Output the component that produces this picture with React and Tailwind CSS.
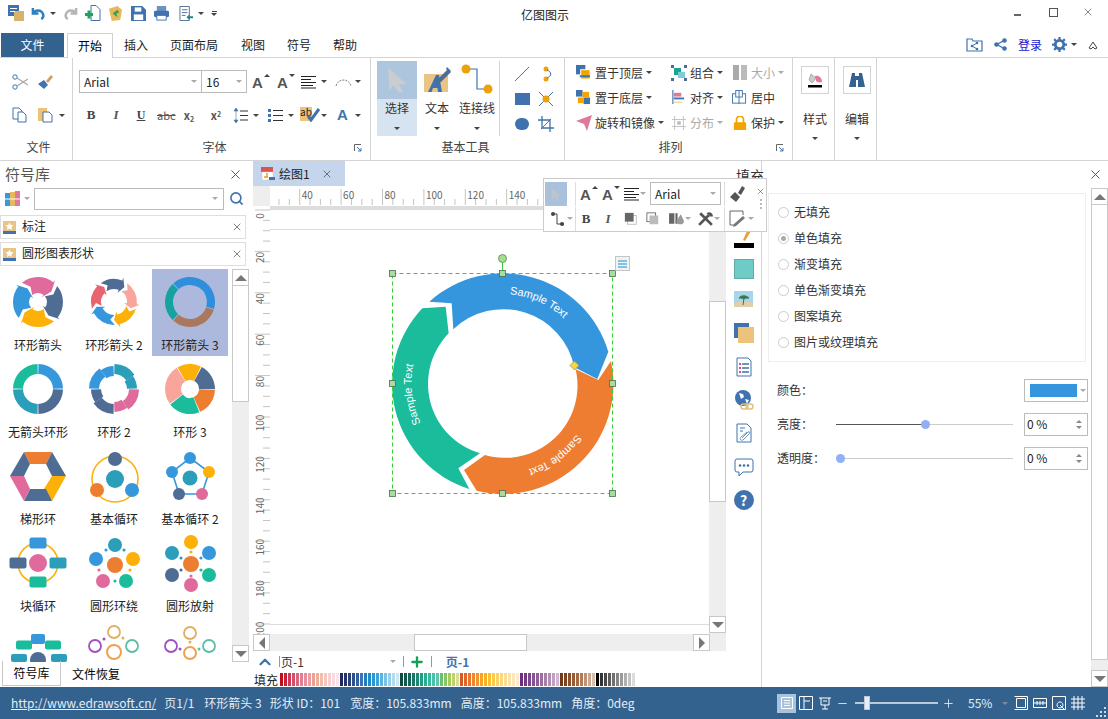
import { X, ChevronUp, Plus, Minus, Search } from 'lucide-react'

const BLUE = '#3f72ae'
const SLATE = '#4f6d94'
const TEAL = '#2b9fb9'
const GREEN = '#1bbc9b'
const PINK = '#df6a9b'
const ORANGE = '#ed7d31'
const YELLOW = '#fdb008'
const SKY = '#3797dc'

const polar = (R, a) => {
  const t = ((a - 90) * Math.PI) / 180
  return `${(38 + R * Math.cos(t)).toFixed(2)} ${(33 + R * Math.sin(t)).toFixed(2)}`
}
const seg = (R, r, a0, a1) =>
  `M${polar(R, a0)}A${R} ${R} 0 0 1 ${polar(R, a1)}L${polar(r, a1)}A${r} ${r} 0 0 0 ${polar(r, a0)}Z`
const arrowSeg = (R, r, a0, a1, head, flare) => {
  const m = (R + r) / 2
  return `M${polar(R, a0)}A${R} ${R} 0 0 1 ${polar(R, a1 - head)}L${polar(R + flare, a1 - head)}L${polar(m, a1)}L${polar(r - flare, a1 - head)}L${polar(r, a1 - head)}A${r} ${r} 0 0 0 ${polar(r, a0)}L${polar(m, a0 + head)}Z`
}

const Caret = ({ light, className = '' }) => (
  <span className={`inline-block w-0 h-0 border-x-[3px] border-x-transparent border-t-[3px] ${light ? 'border-t-[#aaa]' : 'border-t-[#444]'} ${className}`} />
)

const Icon = ({ size = 16, vb = '0 0 16 16', className = '', children }) => (
  <svg width={size} height={size} viewBox={vb} className={`shrink-0 ${className}`}>{children}</svg>
)

const Thumb = ({ children }) => <svg width="76" height="66" viewBox="0 0 76 66">{children}</svg>
const Dot = ({ x, y, r = 7, c }) => <circle cx={x} cy={y} r={r} fill={c} />
const Block = ({ x, y, w = 17, h = 11, c }) => <rect x={x - w / 2} y={y - h / 2} width={w} height={h} rx="2" fill={c} />
const Loop = ({ x, y, r = 6, c }) => <circle cx={x} cy={y} r={r} fill="none" stroke={c} strokeWidth="1.8" />

const Stepped = ({ a0, c }) => (
  <g fill={c}>
    <path d={seg(25, 15, a0 + 1, a0 + 55)} />
    <path d={seg(23, 13, a0 + 55, a0 + 89)} />
  </g>
)

const shapes = [
  {
    name: '环形箭头',
    art: (
      <Thumb>
        <path d={arrowSeg(25, 9, 140, 232, 14, 3)} fill={YELLOW} />
        <path d={arrowSeg(25, 9, 50, 142, 14, 3)} fill={SLATE} />
        <path d={arrowSeg(25, 9, 230, 322, 14, 3)} fill={SKY} />
        <path d={arrowSeg(25, 9, 320, 412, 14, 3)} fill={PINK} />
      </Thumb>
    ),
  },
  {
    name: '环形箭头 2',
    art: (
      <Thumb>
        <path d={arrowSeg(23, 13, 325, 395, 14, 3)} fill={SLATE} />
        <path d={arrowSeg(23, 13, 35, 110, 14, 3)} fill="#f9a59b" />
        <path d={arrowSeg(23, 13, 108, 180, 14, 3)} fill={YELLOW} />
        <path d={arrowSeg(23, 13, 178, 255, 14, 3)} fill={SKY} />
        <path d={arrowSeg(23, 13, 253, 327, 14, 3)} fill="#e8646f" />
      </Thumb>
    ),
  },
  {
    name: '环形箭头 3',
    art: (
      <Thumb>
        <path d={seg(25, 17, -42, 106)} fill="#2f8fdd" />
        <path d={seg(25, 17, 108, 222)} fill="#a9785f" />
        <path d={seg(25, 17, 224, 316)} fill="#16a29f" />
      </Thumb>
    ),
    selected: true,
  },
  {
    name: '无箭头环形',
    art: (
      <Thumb>
        <path d={seg(25, 15, 1, 89)} fill={SKY} />
        <path d={seg(25, 15, 91, 179)} fill={SLATE} />
        <path d={seg(25, 15, 181, 269)} fill={TEAL} />
        <path d={seg(25, 15, 271, 359)} fill={GREEN} />
      </Thumb>
    ),
  },
  {
    name: '环形 2',
    art: (
      <Thumb>
        <Stepped a0={0} c={TEAL} />
        <Stepped a0={90} c={PINK} />
        <Stepped a0={180} c={SLATE} />
        <Stepped a0={270} c={SKY} />
      </Thumb>
    ),
  },
  {
    name: '环形 3',
    art: (
      <Thumb>
        <path d={seg(25, 9, 330, 386)} fill={YELLOW} />
        <path d={seg(25, 9, 28, 90)} fill={SLATE} />
        <path d={seg(25, 9, 92, 156)} fill={ORANGE} />
        <path d={seg(25, 9, 158, 232)} fill={GREEN} />
        <path d={seg(25, 9, 234, 328)} fill="#f9a59b" />
      </Thumb>
    ),
  },
  {
    name: '梯形环',
    art: (
      <Thumb>
        <polygon points="24,9 52,9 46,21 30,21" fill={ORANGE} />
        <polygon points="52,9 66,33 52,33 46,21" fill={SLATE} />
        <polygon points="66,33 52,58 44,46 52,33" fill={YELLOW} />
        <polygon points="52,58 24,58 30,46 46,46" fill={SLATE} />
        <polygon points="24,58 10,33 24,33 30,46" fill={PINK} />
        <polygon points="10,33 24,9 30,21 24,33" fill={SLATE} />
      </Thumb>
    ),
  },
  {
    name: '基本循环',
    art: (
      <Thumb>
        <circle cx="39" cy="36" r="23" fill="none" stroke={YELLOW} strokeWidth="1.6" />
        <Dot x={39} y={36} r={9} c={TEAL} />
        <Dot x={39} y={16} c={SLATE} />
        <Dot x={21} y={47} c={ORANGE} />
        <Dot x={56} y={47} c={SKY} />
      </Thumb>
    ),
  },
  {
    name: '基本循环 2',
    art: (
      <Thumb>
        <polygon points="38,15 57,29 50,51 27,51 20,29" fill="none" stroke={SKY} strokeWidth="1.6" />
        <Dot x={38} y={35} r={7.5} c={TEAL} />
        <Dot x={38} y={15} r={6} c={SKY} />
        <Dot x={57} y={29} r={6} c={YELLOW} />
        <Dot x={50} y={51} r={6} c={PINK} />
        <Dot x={27} y={51} r={6} c={SLATE} />
        <Dot x={20} y={29} r={6} c={SKY} />
      </Thumb>
    ),
  },
  {
    name: '块循环',
    art: (
      <Thumb>
        <circle cx="38" cy="33" r="20" fill="none" stroke={YELLOW} strokeWidth="1.6" />
        <Dot x={38} y={33} r={9} c={PINK} />
        <Block x={38} y={13} c={SKY} />
        <Block x={18} y={33} c={SLATE} />
        <Block x={58} y={33} c={TEAL} />
        <Block x={38} y={52} c={GREEN} />
      </Thumb>
    ),
  },
  {
    name: '圆形环绕',
    art: (
      <Thumb>
        <Dot x={39} y={35} r={8} c={ORANGE} />
        <Dot x={39} y={15} c={TEAL} />
        <Dot x={57} y={29} c={YELLOW} />
        <Dot x={50} y={51} c={GREEN} />
        <Dot x={27} y={51} c={PINK} />
        <Dot x={20} y={29} c={SKY} />
        <Dot x={30} y={20} r={1.6} c={SKY} />
        <Dot x={48} y={20} r={1.6} c={TEAL} />
        <Dot x={54} y={40} r={1.6} c={YELLOW} />
        <Dot x={39} y={51} r={1.6} c={GREEN} />
        <Dot x={23} y={40} r={1.6} c={PINK} />
      </Thumb>
    ),
  },
  {
    name: '圆形放射',
    art: (
      <Thumb>
        <Dot x={39} y={34} r={8} c={ORANGE} />
        <Dot x={39} y={12} c={YELLOW} />
        <Dot x={57} y={23} c={SKY} />
        <Dot x={57} y={45} c={GREEN} />
        <Dot x={39} y={55} c={PINK} />
        <Dot x={20} y={45} c={SLATE} />
        <Dot x={20} y={23} c={TEAL} />
        <Dot x={39} y={22} r={1.6} c={YELLOW} />
        <Dot x={49} y={28} r={1.6} c={SKY} />
        <Dot x={49} y={40} r={1.6} c={GREEN} />
        <Dot x={39} y={46} r={1.6} c={PINK} />
        <Dot x={29} y={40} r={1.6} c={SLATE} />
        <Dot x={29} y={28} r={1.6} c={TEAL} />
      </Thumb>
    ),
  },
  {
    art: (
      <Thumb>
        <Dot x={38} y={43} r={8} c={SLATE} />
        <Block x={38} y={22} w={14} h={10} c={SKY} />
        <Block x={24} y={28} w={16} h={9} c={GREEN} />
        <Block x={53} y={28} w={16} h={9} c={GREEN} />
        <Block x={19} y={41} w={16} h={8} c={TEAL} />
        <Block x={59} y={41} w={16} h={8} c={TEAL} />
      </Thumb>
    ),
  },
  {
    art: (
      <Thumb>
        <circle cx="38" cy="35" r="7" fill="none" stroke="#f0a050" strokeWidth="2" />
        <Loop x={38} y={15} c="#e0b060" />
        <Loop x={56} y={29} c="#5bbfa5" />
        <Loop x={19} y={29} c="#a050c0" />
        <Dot x={28} y={22} r={1.5} c="#a050c0" />
        <Dot x={47} y={21} r={1.5} c="#e0b060" />
      </Thumb>
    ),
  },
  {
    art: (
      <Thumb>
        <circle cx="38" cy="36" r="6" fill="none" stroke="#f0a050" strokeWidth="2" />
        <Loop x={38} y={16} c="#e0b060" />
        <Loop x={57} y={29} c="#5bbfa5" />
        <Loop x={19} y={29} c="#a050c0" />
        <Dot x={38} y={25} r={1.5} c="#e0b060" />
        <Dot x={47} y={32} r={1.5} c="#5bbfa5" />
        <Dot x={28} y={32} r={1.5} c="#a050c0" />
      </Thumb>
    ),
  },
]

const palette = [
  '#c00d1e', '#c9203a', '#ce3b55', '#d2506a', '#d76780', '#e07f92', '#e68e9b', '#ea9ea4', '#eda08f', '#f0ad98', '#f3bcaa', '#f5c7c0', '#f7d0d0', '#f9dbdf', '#fbe3ec',
  '#1f2a5c', '#253469', '#2b3f78', '#2f4f8b', '#35609f', '#3c73b2', '#1f7fbe', '#1f8cc8', '#2898d0', '#3aa5d8', '#5ab4df', '#78c2e5', '#95cfea', '#b0dcee', '#cbe8f3',
  '#0e4a3f', '#12584a', '#156558', '#197565', '#1e8a74', '#229c80', '#2aad8f', '#36ba9e', '#4ac0a8', '#5dc5b0', '#6bbf6f', '#86c662', '#a3cc5a', '#bdd46a', '#d5dea0',
  '#d35b26', '#e0672a', '#e9762c', '#ef8431', '#f2952f', '#f5a428', '#f9b21e', '#fbbf2e', '#fcc94a', '#fcd266', '#f8d77f', '#f9dd94', '#fae2a8', '#fbe6ba', '#fcebcc',
  '#6a2e7f', '#74397f', '#7d4790', '#86548f', '#915f96', '#9c6ea0', '#a77ea9', '#b38eb4', '#c0a0c0', '#d0b6d0',
  '#6e3a1c', '#7e4420', '#8c4f28', '#985b34', '#a56a42', '#b17d58', '#bd9273', '#c9a88f', '#d6bfac',
  '#000000', '#333333', '#484848', '#5c5c5c', '#707070', '#858585', '#9a9a9a', '#afafaf', '#c4c4c4', '#dcdcdc',
]

const Launcher = () => (
  <Icon size={8} vb="0 0 8 8">
    <path d="M0.5 7V0.5H7" fill="none" stroke="#666" />
    <path d="M3 3l4 4M7 4v3H4" fill="none" stroke="#3f72ae" />
  </Icon>
)

const GrowA = ({ shrink, color = '#555' }) => (
  <span className="flex w-[18px] h-[18px] relative">
    <span className="font-bold text-[15px] leading-[20px] font-['Liberation_Sans',sans-serif]" style={{ color }}>A</span>
    <span className={`absolute right-0 top-[1px] w-0 h-0 border-x-[3px] border-x-transparent ${shrink ? 'border-t-[3px] border-t-[#444]' : 'border-b-[3px] border-b-[#444]'}`} />
  </span>
)

const AlignIcon = () => (
  <Icon size={15} vb="0 0 15 15">
    <path d="M0 2.5h15M0 5.5h10M0 8.5h15M0 11.5h12M0 14h15" stroke="#222" strokeWidth="1" />
  </Icon>
)

const Arrow = ({ size = 20, fill = '#c9cdd2' }) => (
  <Icon size={size} vb="0 0 24 30">
    <path d="M2 1L23 20H14L19 29L14 29L8 21L3 27Z" fill={fill} />
  </Icon>
)

const SmallTool = ({ children, label, disabled, caret = true, className = '' }) => (
  <div className={`flex items-center h-[25px] ${className}`}>
    <span className="w-[15px] h-[16px] flex items-center justify-center shrink-0">{children}</span>
    <span className={`ml-[4px] whitespace-nowrap ${disabled ? 'text-[#aaa]' : 'text-[#333]'}`}>{label}</span>
    {caret && <Caret light={disabled} className="ml-[3px]" />}
  </div>
)

const BigTool = ({ label, children, active }) => (
  <div className={`w-10 h-[75px] flex flex-col items-center ${active ? 'bg-[#d6e3f0]' : ''}`}>
    <div className={`w-10 h-[38px] flex items-center justify-center ${active ? 'bg-[#aec5de]' : ''}`}>{children}</div>
    <span className="h-[18px] leading-[18px] whitespace-nowrap">{label}</span>
    <Caret className="mt-[10px]" />
  </div>
)

const Group = ({ label, className, labelClass = '', children, launcher }) => (
  <div className={`relative flex flex-col h-[102px] border-r border-[#d4d4d4] shrink-0 ${className}`}>
    <div className="flex-1 min-h-0">{children}</div>
    <div className={`h-[24px] pb-[2px] flex items-center justify-center text-[#444] ${labelClass}`}>{label}</div>
    {launcher && <span className="absolute right-[8px] bottom-[8px] flex"><Launcher /></span>}
  </div>
)

const Combo = ({ label, className }) => (
  <div className={`h-[23px] border border-[#bcbcbc] bg-white flex items-center justify-between px-[4px] ${className}`}>
    <span className="text-[#222]">{label}</span>
    <Caret light />
  </div>
)

const ScrollBtn = ({ dir, className = '' }) => {
  const arrow = {
    up: 'border-x-[6px] border-x-transparent border-b-[6px] border-b-[#777]',
    down: 'border-x-[6px] border-x-transparent border-t-[6px] border-t-[#777]',
    left: 'border-y-[6px] border-y-transparent border-r-[6px] border-r-[#777]',
    right: 'border-y-[6px] border-y-transparent border-l-[6px] border-l-[#777]',
  }[dir]
  return (
    <div className={`w-[17px] h-[17px] shrink-0 bg-white border border-[#c8c8c8] flex items-center justify-center ${className}`}>
      <span className={`w-0 h-0 ${arrow}`} />
    </div>
  )
}

const TitleBar = () => (
  <div className="h-[32px] flex items-center shrink-0">
    <div className="w-[521px] flex items-center pl-[8px] pb-[6px] shrink-0">
      <Icon>
        <rect x="0" y="0" width="11" height="11" fill={BLUE} />
        <rect x="6" y="6" width="10" height="10" fill="#d9b26a" />
        <path d="M2 3.5h7M2 6.5h5" stroke="#fff" />
      </Icon>
      <Icon size={15} vb="0 0 16 16" className="ml-[7px]">
        <path d="M2 2v6h6M2 8c2-4 9-5 11 1 .6 2-.5 4-2 5" fill="none" stroke="#2f7fc1" strokeWidth="2.6" />
      </Icon>
      <Caret className="ml-[4px]" />
      <Icon size={15} className="ml-[7px]">
        <path d="M14 2v6H8M14 8C12 4 5 3 3 9c-.6 2 .5 4 2 5" fill="none" stroke="#b5b5b5" strokeWidth="2.6" />
      </Icon>
      <Icon size={16} className="ml-[7px]">
        <path d="M6 .5h5l4 4v11H6z" fill="#fff" stroke={BLUE} />
        <path d="M0 9.5h8M4 5.5v8" stroke="#1ea360" strokeWidth="3" />
      </Icon>
      <Icon size={15} className="ml-[7px]">
        <path d="M1 3l9-3 5 4-2 11-9 1z" fill="#e8b95a" />
        <path d="M5 8l5-4 2 3-3 1 1 4z" fill="#3d9c4a" />
      </Icon>
      <Icon size={15} className="ml-[8px]">
        <path d="M0 0h12l4 4v12H0z" fill={BLUE} />
        <rect x="4" y="1.5" width="7" height="4.5" fill="#fff" />
        <rect x="3" y="9" width="10" height="6" fill="#fff" />
      </Icon>
      <Icon size={15} className="ml-[8px]">
        <rect x="3" y="0" width="10" height="6" fill="#6b93bd" />
        <rect x="0" y="5" width="16" height="7" rx="1.5" fill={BLUE} />
        <rect x="3" y="10" width="10" height="5" fill="#fff" stroke={BLUE} />
      </Icon>
      <Icon size={15} className="ml-[10px]">
        <path d="M1 .5h10v15H1z" fill="#fff" stroke={SLATE} />
        <path d="M3 4h6M3 7h6M3 10h4" stroke={SLATE} />
        <path d="M8 12l3-3v2h4v2h-4v2z" fill="#2a7f8f" />
      </Icon>
      <Caret className="ml-[4px]" />
      <span className="ml-[7px] flex flex-col items-center gap-[1px]">
        <span className="w-[5px] h-px bg-[#444]" />
        <Caret />
      </span>
    </div>
    <span className="text-[#222] pb-[3px]">亿图图示</span>
    <div className="ml-auto flex items-center pr-[14px] pb-[8px]">
      <span className="w-[7px] h-[2px] bg-[#666] mt-[6px]" />
      <span className="ml-[28px] w-[9px] h-[9px] border border-[#555]" />
      <X size={12} strokeWidth={1.3} color="#444" className="ml-[24px]" />
    </div>
  </div>
)

const TabRow = () => (
  <div className="h-[25px] flex items-end shrink-0 relative">
    <div className="ml-[1px] w-[63px] h-[24px] pb-px bg-[#33628f] text-white flex items-center justify-center">文件</div>
    <div className="ml-[3px] w-[46px] h-[25px] pb-px bg-white border border-b-0 border-[#d0d0d0] flex items-center justify-center -mb-px z-10">开始</div>
    <div className="flex items-center h-[24px] pb-px text-[#222]">
      <span className="ml-[11px]">插入</span>
      <span className="ml-[22px]">页面布局</span>
      <span className="ml-[23px]">视图</span>
      <span className="ml-[22px]">符号</span>
      <span className="ml-[22px]">帮助</span>
    </div>
    <div className="ml-auto flex items-center h-[24px] pb-px pr-[10px]">
      <Icon size={17} vb="0 0 17 17">
        <path d="M1 3h5l1 2h9v10H1z" fill="none" stroke={BLUE} strokeWidth="1.2" />
        <path d="M11 7L6 10l5 3" fill="none" stroke={BLUE} />
        <circle cx="11" cy="7" r="1.3" fill={BLUE} />
        <circle cx="6" cy="10" r="1.3" fill={BLUE} />
        <circle cx="11" cy="13" r="1.3" fill={BLUE} />
      </Icon>
      <Icon size={13} vb="0 0 13 13" className="ml-[11px]">
        <path d="M10 2.5L3 6.5l7 4" fill="none" stroke={BLUE} strokeWidth="1.4" />
        <circle cx="10.5" cy="2.5" r="2.3" fill={BLUE} />
        <circle cx="2.5" cy="6.5" r="2.3" fill={BLUE} />
        <circle cx="10.5" cy="10.5" r="2.3" fill={BLUE} />
      </Icon>
      <span className="ml-[11px] text-[#1515d0]">登录</span>
      <Icon size={15} vb="0 0 16 16" className="ml-[10px]">
        <circle cx="8" cy="8" r="4.5" fill="none" stroke={BLUE} strokeWidth="3" />
        <path d="M8 0v3M8 13v3M0 8h3M13 8h3M2.3 2.3l2 2M11.7 11.7l2 2M13.7 2.3l-2 2M4.3 11.7l-2 2" stroke={BLUE} strokeWidth="2.4" />
      </Icon>
      <Caret className="ml-[4px]" />
      <Icon size={10} vb="0 0 10 10" className="ml-[11px]">
        <path d="M1 8L5 2l4 6-2 1-2-2-2 2z" fill="none" stroke="#444" />
      </Icon>
    </div>
  </div>
)

const Ribbon = () => (
  <div className="h-[104px] flex shrink-0 border-y border-[#d4d4d4] text-[#333]">
    <Group label="文件" className="w-[73px]" labelClass="pl-[5px]">
      <div className="flex items-center pl-[12px] pt-[14px] h-[33px]">
        <Icon>
          <circle cx="3" cy="3" r="2.2" fill="none" stroke="#3f72ae" />
          <circle cx="3" cy="13" r="2.2" fill="none" stroke="#3f72ae" />
          <path d="M5 4l11 7M5 12L16 5" stroke="#aaa" strokeWidth="1.4" />
        </Icon>
        <Icon className="ml-[9px]">
          <path d="M9 7l5-6 2 2-5 6z" fill="#c9a25e" />
          <path d="M1 10l6-4 4 5-4 4z" fill={BLUE} />
        </Icon>
      </div>
      <div className="flex items-center pl-[12px] h-[33px] pt-[15px]">
        <Icon>
          <path d="M1 1h6l3 3v8H1z" fill="#fff" stroke={BLUE} />
          <path d="M6 5h5l3 3v7H6z" fill="#fff" stroke={BLUE} />
        </Icon>
        <Icon className="ml-[9px]">
          <path d="M1 1h9v13H1z" fill="#edc27a" />
          <path d="M6 5h6l3 3v7H6z" fill="#fff" stroke={BLUE} />
        </Icon>
        <Caret className="ml-[6px]" />
      </div>
    </Group>

    <Group label="字体" className="w-[298px]" labelClass="pr-[14px]" launcher>
      <div className="flex items-center pl-[6px] pt-[12px]">
        <Combo label="Arial" className="w-[123px]" />
        <Combo label="16" className="w-[46px] -ml-px" />
        <span className="ml-[5px] flex"><GrowA /></span>
        <span className="ml-[7px] flex"><GrowA shrink /></span>
        <span className="ml-[6px] flex"><AlignIcon /></span>
        <Caret className="ml-[5px]" />
        <Icon size={17} vb="0 0 17 17" className="ml-[8px]">
          <path d="M1 13C3 5 14 5 16 13" fill="none" stroke="#888" strokeDasharray="2 1" />
        </Icon>
        <Caret className="ml-[3px]" />
      </div>
      <div className="flex items-center h-[24px] mt-[10px] pl-[10px]">
        <span className="w-[16px] text-center font-bold text-[13px] text-[#444] font-['Liberation_Serif',serif]">B</span>
        <span className="ml-[9px] w-[16px] text-center font-bold italic text-[13px] text-[#555] font-['Liberation_Serif',serif]">I</span>
        <span className="ml-[9px] w-[16px] text-center font-bold underline text-[12px] text-[#444] font-['Liberation_Serif',serif]">U</span>
        <span className="ml-[8px] w-[18px] text-center text-[11px] text-[#555] line-through">abc</span>
        <span className="ml-[6px] w-[16px] text-center font-bold text-[11px] text-[#555]">x<sub className="text-[7px]">2</sub></span>
        <span className="ml-[11px] w-[16px] text-center font-bold text-[11px] text-[#555]">x<sup className="text-[7px]">2</sup></span>
        <Icon size={15} vb="0 0 15 15" className="ml-[9px]">
          <path d="M3 0L1 3h4zM3 15l-2-3h4zM3 3v9" fill={BLUE} stroke={BLUE} strokeWidth=".6" />
          <path d="M7 3h8M7 7.500h8M7 12h8" stroke="#333" />
        </Icon>
        <Caret className="ml-[5px]" />
        <Icon size={15} vb="0 0 15 15" className="ml-[9px]">
          <rect x="0" y="1" width="3" height="3" fill={BLUE} />
          <rect x="0" y="6" width="3" height="3" fill={BLUE} />
          <rect x="0" y="11" width="3" height="3" fill={BLUE} />
          <path d="M5 2.500h10M5 7.500h10M5 12.500h10" stroke="#333" />
        </Icon>
        <Caret className="ml-[5px]" />
        <span className="relative ml-[6px] w-[20px] h-[16px] flex">
          <span className="w-[13px] h-[14px] bg-[#edc27a] text-[10px] leading-[10px] text-[#222]">ab</span>
          <Icon size={14} vb="0 0 14 14" className="-ml-[6px] mt-[1px]">
            <path d="M2 8l3 4 8-11" fill="none" stroke={BLUE} strokeWidth="3" />
          </Icon>
        </span>
        <Caret className="ml-[1px]" />
        <span className="ml-[10px] font-bold text-[15px] text-[#3f72ae] font-['Liberation_Sans',sans-serif]">A</span>
        <Caret className="ml-[7px]" />
      </div>
    </Group>

    <Group label="基本工具" className="w-[194px]" labelClass="pr-[4px]">
      <div className="flex items-start pl-[6px] pt-[3px]">
        <BigTool label="选择" active><Arrow size={26} /></BigTool>
        <BigTool label="文本">
          <Icon size={28} vb="0 0 28 28">
            <rect x="1" y="8" width="24" height="18" fill="#e9c484" />
            <path d="M5 26L13 9h3l3 17h-4l-.5-4H10l-1.500 4z" fill={BLUE} />
            <path d="M15 13L25 3l3 3-10 10-4 1z" fill={SLATE} />
            <path d="M24 1l4 4-2 1-3-3z" fill={BLUE} />
          </Icon>
        </BigTool>
        <BigTool label="连接线">
          <Icon size={32} vb="0 0 32 32">
            <path d="M5 5h11v20h13" fill="none" stroke={BLUE} strokeWidth="1.2" />
            <circle cx="5" cy="5" r="4.500" fill="#eda20b" />
            <circle cx="27" cy="25" r="4.500" fill="#eda20b" />
          </Icon>
        </BigTool>
        <div className="h-[75px] w-px bg-[#d4d4d4] ml-[2px]" />
        <div className="grid grid-cols-[24px_24px] auto-rows-[25px] ml-[10px] justify-items-center items-center">
          <Icon><path d="M1 15L15 1" stroke={BLUE} /></Icon>
          <Icon>
            <circle cx="8" cy="3" r="2.500" fill="#eda20b" />
            <circle cx="8" cy="13" r="2.500" fill="#eda20b" />
            <path d="M9 4c5 2 5 6 0 8" fill="none" stroke={BLUE} />
          </Icon>
          <span className="w-[15px] h-[12px] bg-[#3f72ae]" />
          <Icon>
            <path d="M1 1l14 14M15 1L1 15" stroke={BLUE} />
            <circle cx="8" cy="8" r="3.500" fill="#eda20b" />
          </Icon>
          <span className="w-[14px] h-[12px] rounded-full bg-[#3f72ae]" />
          <Icon>
            <path d="M4 0v12h12M0 4h12v12" fill="none" stroke={BLUE} strokeWidth="1.3" />
            <path d="M3 13L13 3" stroke={BLUE} />
          </Icon>
        </div>
      </div>
    </Group>

    <Group label="排列" className="w-[228px]" labelClass="pr-[16px]" launcher>
      <div className="grid grid-cols-[95px_61px_60px] auto-rows-[25px] pl-[11px] pt-[2px]">
        <SmallTool label="置于顶层">
          <Icon size={15}>
            <rect x="0" y="0" width="10" height="10" fill={BLUE} />
            <rect x="5" y="5" width="10" height="10" fill="#f4a400" stroke="#fff" />
            <rect x="4" y="11" width="11" height="2" fill={BLUE} />
          </Icon>
        </SmallTool>
        <SmallTool label="组合">
          <Icon size={16}>
            <rect x="3" y="3" width="7" height="7" fill="#1aa390" />
            <rect x="7" y="7" width="7" height="6" fill="#7fcbdc" />
            <path d="M0 0h3v3H0zM13 0h3v3h-3zM0 13h3v3H0zM13 13h3v3h-3z" fill={SLATE} />
          </Icon>
        </SmallTool>
        <SmallTool label="大小" disabled>
          <span className="flex gap-[2px]"><span className="w-[6px] h-[15px] bg-[#aaa]" /><span className="w-[6px] h-[15px] bg-[#bbb]" /></span>
        </SmallTool>
        <SmallTool label="置于底层">
          <Icon size={15}>
            <rect x="0" y="0" width="7" height="7" fill={BLUE} />
            <rect x="8" y="8" width="7" height="7" fill={BLUE} />
            <rect x="7" y="2" width="7" height="6" fill="#f4a400" />
            <rect x="2" y="8" width="6" height="6" fill="#f4a400" />
          </Icon>
        </SmallTool>
        <SmallTool label="对齐">
          <Icon size={15}>
            <path d="M2 0v15" stroke={BLUE} strokeWidth="1.2" />
            <rect x="3" y="3" width="8" height="4" fill="#e0789a" />
            <rect x="3" y="8" width="11" height="2" fill={BLUE} />
            <path d="M3 13h9" stroke="#edc27a" />
          </Icon>
        </SmallTool>
        <SmallTool label="居中" caret={false}>
          <Icon size={15}>
            <rect x=".5" y="4" width="14" height="10" fill="none" stroke={BLUE} />
            <rect x="4" y=".5" width="7" height="7" fill="#fff" stroke={BLUE} />
            <path d="M7.500 0v15" stroke={BLUE} />
          </Icon>
        </SmallTool>
        <SmallTool label="旋转和镜像">
          <Icon size={16}>
            <path d="M0 6L16 0 11 16 8 9z" fill="#dd7a9e" />
          </Icon>
        </SmallTool>
        <SmallTool label="分布" disabled>
          <Icon size={14}>
            <path d="M3 0v16M13 0v16M0 4h16M0 12h16" stroke="#bbb" />
            <rect x="6" y="6" width="4" height="4" fill="#bbb" />
          </Icon>
        </SmallTool>
        <SmallTool label="保护">
          <Icon size={14}>
            <path d="M4 8V4a4 4 0 018 0v4" fill="none" stroke="#f4a400" strokeWidth="2" />
            <rect x="1" y="7" width="14" height="9" rx="1" fill="#f4a400" />
          </Icon>
        </SmallTool>
      </div>
    </Group>

    <div className="flex flex-col items-center w-[42px] h-[102px] border-r border-[#d4d4d4] shrink-0 pt-[8px] pl-[3px]">
      <div className="w-[28px] h-[28px] border border-[#d4d4d4] flex items-center justify-center">
        <Icon>
          <path d="M4 2l5 4-4 5-3-3z" fill="#ccc" stroke="#888" strokeWidth=".6" />
          <path d="M8 4c4-1 7 2 7 6-3 1-5 0-6-1z" fill="#dd7a9e" />
          <rect x="1" y="13" width="14" height="2.500" fill="#000" />
        </Icon>
      </div>
      <span className="mt-[15px] leading-[20px]">样式</span>
      <Caret className="mt-[8px]" />
    </div>
    <div className="flex flex-col items-center w-[42px] h-[102px] border-r border-[#d4d4d4] shrink-0 pt-[8px] pl-[3px]">
      <div className="w-[28px] h-[28px] border border-[#d4d4d4] flex items-center justify-center">
        <Icon>
          <path d="M3 1h3v3h4V1h3l3 14H9V8H7v7H0z" fill="#34618f" />
        </Icon>
      </div>
      <span className="mt-[15px] leading-[20px]">编辑</span>
      <Caret className="mt-[8px]" />
    </div>
  </div>
)

const SymbolPanel = () => (
  <aside className="w-[250px] shrink-0 flex flex-col relative">
    <div className="h-[26px] flex items-center justify-between pl-[5px] pr-[7px]">
      <span className="text-[15px] text-[#555]">符号库</span>
      <X size={15} strokeWidth={1.4} color="#444" />
    </div>
    <div className="h-[23px] flex items-center pl-[5px]">
      <Icon size={15} vb="0 0 15 15">
        <rect x="0" y="2" width="5" height="13" fill="#3a97dc" />
        <rect x="5" y="1" width="5" height="14" fill="#e8b95a" />
        <rect x="10" y="0" width="5" height="15" fill="#e0789a" />
        <path d="M0 8h15" stroke="#fff" />
      </Icon>
      <Caret light className="ml-[4px] border-t-[#888]" />
      <div className="ml-[4px] w-[190px] h-[22px] border border-[#bcbcbc] flex items-center justify-end pr-[5px]"><Caret light /></div>
      <Search size={15} strokeWidth={2.6} color={BLUE} className="ml-[5px]" />
    </div>
    {['标注', '圆形图表形状'].map((t, i) => (
      <div key={t} className={`w-[246px] h-[24px] border border-[#dedede] flex items-center pl-[2px] pr-[2px] ${i ? 'mt-[3px]' : 'mt-[5px]'}`}>
        <Icon size={13} vb="0 0 13 13">
          <rect width="13" height="10" fill="#e9c484" />
          <rect y="10" width="13" height="3" fill={BLUE} />
          <path d="M6.500 1.500l1.200 2.500 2.800.3-2 1.900.5 2.700-2.500-1.300-2.500 1.300.5-2.700-2-1.900 2.800-.3z" fill="#fff" />
        </Icon>
        <span className="ml-[6px] text-[#222] leading-[16px] pb-[2px]">{t}</span>
        <X size={12} strokeWidth={1.5} color="#555" className="ml-auto" />
      </div>
    ))}
    <div className="flex flex-1 min-h-0 pt-[3px]">
      <div className="w-[228px] h-[393px] overflow-hidden grid grid-cols-[76px_76px_76px] auto-rows-[87px] shrink-0">
        {shapes.map((s, i) => (
          <div key={i} className={`flex flex-col items-center text-[#222] ${s.selected ? 'bg-[#adb9dc]' : ''}`}>
            {s.art}
            {s.name && <span className="mt-[1px] leading-[18px] whitespace-nowrap">{s.name}</span>}
          </div>
        ))}
      </div>
      <div className="ml-[4px] w-[17px] h-[393px] flex flex-col bg-[#eeeeee]">
        <ScrollBtn dir="up" />
        <div className="h-[116px] bg-white border border-t-0 border-[#c8c8c8]" />
        <ScrollBtn dir="down" className="mt-auto" />
      </div>
    </div>
    <div className="h-[26px] flex items-start shrink-0">
      <div className="ml-[2px] w-[59px] h-[25px] border border-t-0 border-[#c8c8c8] flex items-center justify-center">符号库</div>
      <span className="ml-[11px] leading-[25px]">文件恢复</span>
    </div>
  </aside>
)

const Ruler = () => (
  <svg width="456" height="20" viewBox="0 0 456 20" className="block">
    {Array.from({ length: 45 }, (_, i) => {
      const x = i * 10.35 - 1.35
      const major = i % 4 === 3
      return <path key={i} d={`M${x} ${major ? 3 : 13}V19`} stroke="#c4c4c4" />
    })}
    {[40, 60, 80, 100, 120, 140].map((n, i) => (
      <text key={n} x={31.7 + i * 41.4} y={13} fontSize="10" fill="#666">{n}</text>
    ))}
  </svg>
)

const VRuler = () => (
  <svg width="17" height="428" viewBox="0 0 17 428" className="block">
    {Array.from({ length: 42 }, (_, i) => (
      <path key={i} d={`M${i % 4 === 0 ? 2 : 10} ${i * 10.35 + 4}H17`} stroke="#c4c4c4" />
    ))}
    {[0, 20, 40, 60, 80, 100, 120, 140, 160, 180, 200].map((n, i) => (
      <text key={n} transform={`translate(11 ${i * 41.4 + 10}) rotate(-90)`} textAnchor="middle" fontSize="10" fill="#666">{n}</text>
    ))}
  </svg>
)

const Handle = ({ x, y }) => <rect x={x - 3} y={y - 3} width="6" height="6" fill="#a9dca0" stroke="#47704a" strokeWidth=".8" />

const circlePath = (r) => `M502.500 ${383 - r}A${r} ${r} 0 1 1 502.499 ${383 - r}`

const Diagram = () => (
  <svg width="260" height="260" viewBox="380 250 260 260" className="absolute left-[110px] top-[44px]">
    <g transform="translate(380 250) scale(.3333)">
      <path d="M148 155A330 330 0 0 1 685 305L652 387L583 352A217 217 0 0 0 220 238L215 160Z" fill="#3596dd" />
      <path d="M693 333A330 330 0 0 1 290 722L252 660L315 615A217 217 0 0 0 587 358L655 390Z" fill="#ee7d31" />
      <path d="M268 717A330 330 0 0 1 127 175L197 170L206 250A217 217 0 0 0 300 610L235 655Z" fill="#1bbc9b" />
    </g>
    <path id="ring-blue" d={circlePath(89)} fill="none" />
    <path id="ring-orange" d={circlePath(90)} fill="none" />
    <path id="ring-green" d={circlePath(91)} fill="none" />
    <g fontFamily="'Liberation Sans', sans-serif" fontSize="11" fill="#fff" textAnchor="middle">
      <text><textPath href="#ring-blue" startOffset="6.7%">Sample Text</textPath></text>
      <text><textPath href="#ring-orange" startOffset="40%">Sample Text</textPath></text>
      <text><textPath href="#ring-green" startOffset="73%">Sample Text</textPath></text>
    </g>
    <rect x="392.500" y="273.500" width="220" height="220" fill="none" stroke="#2fd02f" strokeDasharray="4 3" />
    <path d="M502.500 262V273" stroke="#2fd02f" />
    <circle cx="502.500" cy="258.500" r="4" fill="#a6dc8f" stroke="#6f9a6a" />
    {[392.5, 502.5, 612.5].flatMap((x) => [273.5, 383.5, 493.5].map((y) => (x === 502.5 && y === 383.5 ? null : <Handle key={`${x}-${y}`} x={x} y={y} />)))}
    <path d="M574.500 361l4.500 4.500-4.500 4.500-4.500-4.500z" fill="#f6d64a" stroke="#a08a20" strokeWidth=".7" />
    <rect x="615.500" y="256.500" width="14" height="14" fill="#f1f1f1" stroke="#c4c4c4" />
    <path d="M618 261h9M618 264h9M618 267h9" stroke="#5fb2dc" strokeWidth="1.6" />
  </svg>
)

const Canvas = () => (
  <div className="w-[476px] shrink-0 pl-[3px] flex flex-col">
    <div className="h-[25px] shrink-0">
      <div className="w-[92px] h-[25px] bg-[#c5d5ec] flex items-center pl-[8px]">
        <Icon size={14} vb="0 0 14 14">
          <rect x="0" y="0" width="12" height="5" fill="#d9534f" />
          <rect x="1" y="5" width="11" height="8" fill="#fff" stroke="#ccc" strokeWidth=".5" />
          <path d="M6 6v4M3 10h4" stroke="#e0a020" strokeWidth="1.4" />
          <rect x="8" y="10" width="6" height="3" fill={BLUE} />
        </Icon>
        <span className="ml-[4px] text-[#222]">绘图1</span>
        <X size={12} strokeWidth={1.4} color="#444" className="ml-[11px]" />
      </div>
    </div>
    <div className="h-[20px] flex shrink-0">
      <div className="w-[17px] bg-[#eeeeee]" />
      <Ruler />
    </div>
    <div className="h-[428px] flex shrink-0">
      <div className="w-[17px] shrink-0"><VRuler /></div>
      <div className="relative w-[439px] flex flex-col shrink-0">
        <div className="h-[4px] bg-[#dddddd]" />
        <div className="h-[20px] border-b border-[#dcdcdc]" />
        <div className="h-[395px] border-b border-[#dcdcdc]" />
        <Diagram />
      </div>
      <div className="w-[17px] shrink-0 bg-[#eeeeee] flex flex-col">
        <div className="h-[95px]" />
        <div className="h-[201px] bg-white border border-[#c8c8c8]" />
        <ScrollBtn dir="down" className="mt-[114px]" />
      </div>
    </div>
    <div className="h-[17px] flex shrink-0 bg-[#eeeeee]">
      <ScrollBtn dir="left" />
      <div className="ml-[144px] w-[113px] h-[17px] bg-white border border-[#c8c8c8]" />
      <ScrollBtn dir="right" className="ml-[166px]" />
    </div>
    <div className="h-[21px] flex items-center shrink-0 text-[#333]">
      <ChevronUp size={18} strokeWidth={3} color={BLUE} className="ml-[3px]" />
      <span className="ml-[5px] w-px h-[11px] bg-[#999]" />
      <span className="ml-px">页-1</span>
      <Caret light className="ml-[86px]" />
      <span className="ml-[7px] w-px h-[11px] bg-[#999]" />
      <Plus size={16} strokeWidth={3.4} color="#14a05a" className="ml-[5px]" />
      <span className="ml-[6px] w-px h-[11px] bg-[#999]" />
      <span className="ml-[14px] text-[#3f72ae] font-bold">页-1</span>
    </div>
    <div className="h-[15px] flex items-center shrink-0">
      <span className="ml-[1px] w-[26px] text-[#222] leading-[15px]">填充</span>
      <div className="flex h-[13px]">
        {palette.map((c, i) => <span key={i} className="w-[3px] mr-px" style={{ backgroundColor: c }} />)}
      </div>
    </div>
  </div>
)

const IconStrip = () => (
  <div className="w-[36px] shrink-0 border-r border-[#d4d4d4] flex flex-col items-center relative">
    <span className="h-[28px] self-start pl-[10px] leading-[28px] text-[14px] text-[#333] whitespace-nowrap">填充</span>
    <div className="h-[32px]" />
    <div className="flex flex-col items-center w-full">
      <div className="h-[33px] flex items-center justify-center">
        <Icon size={20} vb="0 0 20 20">
          <path d="M3 0h14v16H3z" fill="#fff" />
          <path d="M9 12l5-11 3 2-6 10z" fill="#e8a040" />
          <rect x="0" y="15" width="20" height="5" fill="#000" />
        </Icon>
      </div>
      <div className="h-[30px] flex items-center justify-center">
        <span className="w-[20px] h-[20px] bg-[#6fcbc5] border border-[#63a9a5]" />
      </div>
      <div className="h-[32px] flex items-center justify-center">
        <Icon size={19} vb="0 0 19 19">
          <rect width="19" height="16" fill="#a9d4ea" />
          <path d="M0 12c5-2 12-2 19 0v4H0z" fill="#e0cfa8" />
          <path d="M9 14l1-7M5 7c2-3 7-3 10 0-3 0-4 0-5 1-2-1-3-1-5-1z" fill="#2e7d4e" stroke="#2e7d4e" />
        </Icon>
      </div>
      <div className="h-[34px] flex items-center justify-center">
        <Icon size={20} vb="0 0 20 20">
          <rect x="0" y="0" width="15" height="15" fill={BLUE} />
          <rect x="4" y="4" width="16" height="16" fill="#edc27a" />
        </Icon>
      </div>
      <div className="h-[34px] flex items-center justify-center">
        <Icon size={20} vb="0 0 20 20">
          <path d="M3 1h11l3 3v15H3z" fill="#fff" stroke={BLUE} />
          <rect x="5" y="6" width="2" height="2" fill="#e0507a" />
          <rect x="5" y="10" width="2" height="2" fill="#e0507a" />
          <rect x="5" y="14" width="2" height="2" fill="#e0507a" />
          <path d="M8 7h7M8 11h7M8 15h7" stroke={BLUE} strokeWidth="1.4" />
        </Icon>
      </div>
      <div className="h-[32px] flex items-center justify-center">
        <Icon size={20} vb="0 0 20 20">
          <circle cx="9" cy="8" r="8" fill={BLUE} />
          <path d="M5 3l4 1 1 3-3 2zM11 9l4 1-2 4z" fill="#fff" />
          <rect x="7" y="14" width="7" height="5" rx="2.500" fill="none" stroke="#e0c080" strokeWidth="1.500" />
          <rect x="12" y="14" width="7" height="5" rx="2.500" fill="none" stroke="#e0c080" strokeWidth="1.500" />
        </Icon>
      </div>
      <div className="h-[34px] flex items-center justify-center">
        <Icon size={20} vb="0 0 20 20">
          <path d="M3 1h10l4 4v14H3z" fill="#fff" stroke={BLUE} />
          <path d="M6 5h5M6 8h3" stroke={BLUE} />
          <path d="M8 15l6-6c2-1 2 1 1 2l-6 6c-2 1-4-1-2-3l6-5" fill="none" stroke="#6a9ac4" />
        </Icon>
      </div>
      <div className="h-[33px] flex items-center justify-center">
        <Icon size={20} vb="0 0 20 20">
          <path d="M3 2h14a2 2 0 012 2v9a2 2 0 01-2 2H9l-4 4v-4H3a2 2 0 01-2-2V4a2 2 0 012-2z" fill="#fff" stroke={BLUE} />
          <circle cx="6" cy="8.500" r="1.300" fill={BLUE} />
          <circle cx="10" cy="8.500" r="1.300" fill={BLUE} />
          <circle cx="14" cy="8.500" r="1.300" fill={BLUE} />
        </Icon>
      </div>
      <div className="h-[34px] flex items-center justify-center">
        <span className="w-[20px] h-[20px] rounded-full bg-[#3f72ae] text-white font-bold text-[14px] leading-[20px] text-center">?</span>
      </div>
    </div>
  </div>
)

const Spinner = ({ value }) => (
  <div className="w-[64px] h-[23px] border border-[#bcbcbc] flex items-center justify-between pl-[2px] pr-[5px] text-[#222]">
    <span>{value}</span>
    <span className="flex flex-col gap-[3px]">
      <span className="w-0 h-0 border-x-[3px] border-x-transparent border-b-[3px] border-b-[#888]" />
      <span className="w-0 h-0 border-x-[3px] border-x-transparent border-t-[3px] border-t-[#888]" />
    </span>
  </div>
)

const FillPanel = () => (
  <div className="flex-1 min-w-0 flex flex-col">
    <div className="h-[27px] flex items-center justify-end pr-[5px] shrink-0">
      <X size={15} strokeWidth={1.4} color="#444" />
    </div>
    <div className="flex flex-1 min-h-0">
      <div className="w-[329px] shrink-0 text-[#333]">
        <div className="ml-[6px] mt-[5px] w-[318px] h-[169px] border border-[#eeeeee] pt-[5px] pl-[9px]">
          {['无填充', '单色填充', '渐变填充', '单色渐变填充', '图案填充', '图片或纹理填充'].map((t, i) => (
            <div key={t} className="h-[26px] flex items-center">
              <span className="w-[11px] h-[11px] rounded-full border border-[#cccccc] flex items-center justify-center">
                {i === 1 && <span className="w-[5px] h-[5px] rounded-full bg-[#aaaaaa]" />}
              </span>
              <span className="ml-[5px]">{t}</span>
            </div>
          ))}
        </div>
        <div className="mt-[11px] ml-[15px] h-[34px] flex items-center justify-between pr-[3px]">
          <span>颜色：</span>
          <div className="w-[64px] h-[23px] border border-[#bcbcbc] flex items-center pl-[5px]">
            <span className="w-[47px] h-[13px] bg-[#3596dd]" />
            <Caret light className="ml-[3px]" />
          </div>
        </div>
        <div className="ml-[15px] h-[34px] flex items-center">
          <span className="w-[59px]">亮度：</span>
          <div className="relative w-[177px] h-px bg-[#cccccc]">
            <div className="w-[89px] h-px bg-[#555555]" />
            <span className="absolute left-[85px] -top-[4px] w-[9px] h-[9px] rounded-full bg-[#8fb0f5]" />
          </div>
          <div className="ml-[11px]"><Spinner value="0 %" /></div>
        </div>
        <div className="ml-[15px] h-[34px] flex items-center">
          <span className="w-[59px]">透明度：</span>
          <div className="relative w-[177px] h-px bg-[#cccccc]">
            <span className="absolute left-0 -top-[4px] w-[9px] h-[9px] rounded-full bg-[#8fb0f5]" />
          </div>
          <div className="ml-[11px]"><Spinner value="0 %" /></div>
        </div>
      </div>
      <div className="w-[17px] h-[499px] flex flex-col bg-[#eeeeee] shrink-0">
        <ScrollBtn dir="up" />
        <div className="h-[455px] bg-white border border-t-0 border-[#c8c8c8]" />
        <ScrollBtn dir="down" className="mt-auto" />
      </div>
    </div>
  </div>
)

const MiniToolbar = () => (
  <div className="absolute left-[543px] top-[17px] w-[224px] h-[54px] bg-white border border-[#cccccc] z-20 flex flex-col pt-[2px] text-[#222]">
    <div className="h-[25px] flex items-center">
      <span className="ml-[1px] w-[22px] h-[24px] bg-[#a9c1dc] flex items-center justify-center"><Arrow size={14} fill="#bcc4cc" /></span>
      <span className="ml-[8px] w-px h-[24px] bg-[#dddddd]" />
      <span className="ml-[4px] flex"><GrowA /></span>
      <span className="ml-[4px] flex"><GrowA shrink /></span>
      <span className="ml-[4px] flex"><AlignIcon /></span>
      <Caret light className="ml-[1px]" />
      <Combo label="Arial" className="ml-[4px] w-[71px]" />
      <span className="ml-[3px] w-px h-[24px] bg-[#dddddd]" />
      <Icon size={16} className="ml-[4px]">
        <path d="M9 7l4-7 3 2-4 7z" fill="#555" />
        <path d="M1 11l5-5 5 5-4 5z" fill="#555" />
      </Icon>
      <X size={9} strokeWidth={1.6} color="#555" className="ml-[11px] -mt-[4px]" />
    </div>
    <div className="h-[25px] flex items-center">
      <Icon size={16} className="ml-[6px]">
        <path d="M3 3h4v10h7" fill="none" stroke="#444" />
        <circle cx="3" cy="3" r="2" fill="#444" />
        <circle cx="12" cy="13" r="2" fill="#444" />
      </Icon>
      <Caret light className="ml-[1px]" />
      <span className="ml-[2px] w-px h-[24px] bg-[#dddddd]" />
      <span className="ml-[3px] w-[14px] text-center font-bold text-[13px] text-[#444] font-['Liberation_Serif',serif]">B</span>
      <span className="ml-[8px] w-[14px] text-center font-bold italic text-[13px] text-[#555] font-['Liberation_Serif',serif]">I</span>
      <Icon size={14} className="ml-[9px]">
        <rect x="4" y="4" width="10" height="10" fill="none" stroke="#bbb" />
        <rect x="1" y="1" width="10" height="10" fill="#666" />
      </Icon>
      <Icon size={14} className="ml-[8px]">
        <rect x="1" y="1" width="10" height="10" fill="none" stroke="#666" />
        <rect x="4" y="4" width="10" height="10" fill="#bbb" />
      </Icon>
      <Icon size={17} className="ml-[8px]">
        <path d="M1 3h5v10H1zM7 3h2v10H7z" fill="#666" />
        <path d="M12 4l3 6a3.500 3.500 0 01-7 0z" fill="#9a9a9a" />
      </Icon>
      <Caret light />
      <Icon size={17} className="ml-[6px]">
        <path d="M2 14L11 5M3 3l11 11" stroke="#555" strokeWidth="2.600" />
        <path d="M9 3c3-2 6 0 6 3l-3 0-1-1z" fill="#555" />
      </Icon>
      <Caret light />
      <span className="ml-[4px] w-px h-[24px] bg-[#dddddd]" />
      <Icon size={18} vb="0 0 18 18" className="ml-[4px]">
        <path d="M14 5V1H1v14h6" fill="none" stroke="#666" />
        <path d="M5 14l9-8 2 2-9 8-3 1z" fill="#777" />
      </Icon>
      <Caret light className="ml-[1px]" />
      <span className="ml-[6px] flex flex-col gap-[2px] -mt-[30px]">
        <span className="w-[2px] h-[2px] bg-[#bbb]" />
        <span className="w-[2px] h-[2px] bg-[#bbb]" />
        <span className="w-[2px] h-[2px] bg-[#bbb]" />
      </span>
    </div>
  </div>
)

const StatusIcon = ({ d, active }) => (
  <span className={`w-[19px] h-[19px] flex items-center justify-center ${active ? 'bg-[#a9c3dc]' : ''}`}>
    <svg width="14" height="14" viewBox="0 0 14 14"><path d={d} fill="none" stroke="#fff" /></svg>
  </span>
)

const StatusBar = () => (
  <div className="h-[32px] bg-[#33628f] flex items-center shrink-0 text-[#e4ecf4] relative">
    <span className="ml-[11px] underline">http://www.edrawsoft.cn/</span>
    <span className="ml-[8px]">页1/1</span>
    <span className="ml-[10px]">环形箭头 3</span>
    <span className="ml-[8px]">形状 ID：101</span>
    <span className="ml-[10px]">宽度：105.833mm</span>
    <span className="ml-[9px]">高度：105.833mm</span>
    <span className="ml-[9px]">角度：0deg</span>
    <div className="ml-auto flex items-center pr-[21px]">
      <StatusIcon active d="M1.500 1.500h11v11h-11zM4 4.500h6M4 7h6M4 9.500h6" />
      <StatusIcon d="M.5.5h13v13H.5zM5 .5v13M5 5h6" />
      <StatusIcon d="M1 2h12M3 2v7h8V2M7 9v4M4 13h6M5 5h4" />
      <Minus size={13} strokeWidth={1.4} color="#fff" className="ml-[2px]" />
      <div className="relative ml-[6px] w-[83px] h-[2px] bg-[#bcc9d8]">
        <span className="absolute left-[9px] -top-[6px] w-[6px] h-[14px] bg-[#e6edf4] border border-[#bcc9d8]" />
      </div>
      <Plus size={13} strokeWidth={1.4} color="#fff" className="ml-[4px]" />
      <span className="ml-[13px] w-[24px]">55%</span>
      <Caret light className="ml-[10px] opacity-60" />
      <span className="ml-[3px] flex"><StatusIcon d="M2.500 2.500h9v9h-9zM.5.5h13v13H.5" /></span>
      <StatusIcon d="M.5 2.500h13v9H.5zM4 5v4M7 5v4M10 5v4M1 7h12" />
      <StatusIcon d="M.5.5h13v13H.5zM5 9a3 3 0 100-.1M8 9l4 4" />
      <StatusIcon d="M3 0v14M7 0v14M11 0v14M0 3h14M0 7h14M0 11h14" />
    </div>
    <span className="absolute right-[2px] bottom-[2px] grid grid-cols-3 gap-[2px]">
      <span className="w-[2px] h-[2px]" /><span className="w-[2px] h-[2px]" /><span className="w-[2px] h-[2px] bg-[#cdd9e6]" />
      <span className="w-[2px] h-[2px]" /><span className="w-[2px] h-[2px] bg-[#cdd9e6]" /><span className="w-[2px] h-[2px] bg-[#cdd9e6]" />
      <span className="w-[2px] h-[2px] bg-[#cdd9e6]" /><span className="w-[2px] h-[2px] bg-[#cdd9e6]" /><span className="w-[2px] h-[2px] bg-[#cdd9e6]" />
    </span>
  </div>
)

export default function App() {
  return (
    <div className="w-[1108px] h-[719px] overflow-hidden flex flex-col bg-white text-[12px] leading-[18px] font-['Noto_Sans_CJK_SC','Liberation_Sans',sans-serif]">
      <TitleBar />
      <TabRow />
      <Ribbon />
      <div className="h-[526px] flex relative shrink-0">
        <SymbolPanel />
        <Canvas />
        <IconStrip />
        <FillPanel />
        <MiniToolbar />
      </div>
      <StatusBar />
    </div>
  )
}
